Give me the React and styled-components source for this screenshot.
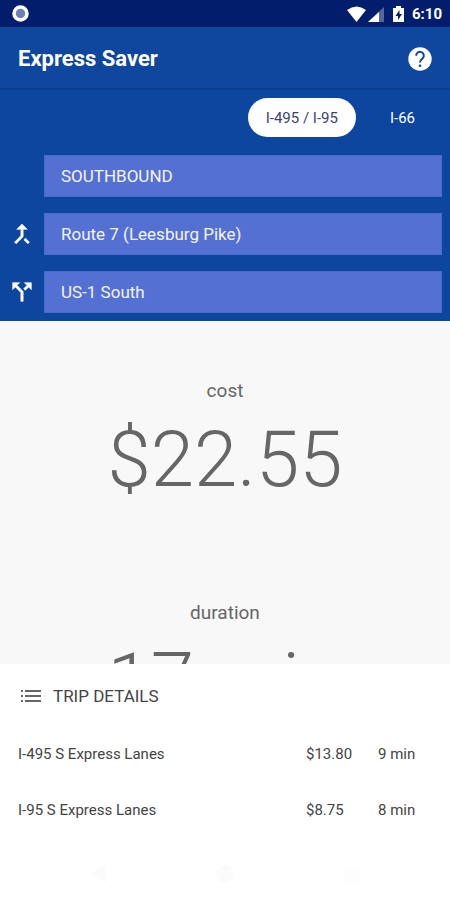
import React, { useState } from "react";
import styled, { createGlobalStyle } from "styled-components";

const GlobalStyle = createGlobalStyle`
  *, *::before, *::after { box-sizing: border-box; }
  body {
    margin: 0;
    font-family: Roboto, "Liberation Sans", sans-serif;
    background: #fff;
  }
  button, select { font: inherit; }
`;

const Screen = styled.div`
  display: flex;
  flex-direction: column;
  height: 100vh;
  overflow: hidden;
`;

const StatusBar = styled.div`
  flex: none;
  display: flex;
  align-items: center;
  justify-content: space-between;
  height: 27px;
  padding: 0 8px 0 12px;
  background: #011d6c;
  color: #fff;
`;

const StatusIcons = styled.div`
  display: flex;
  align-items: center;
`;

const Clock = styled.span`
  margin-left: 6px;
  font-size: 15px;
  line-height: 20px;
  font-weight: 700;
`;

const Svg = styled.svg`
  display: block;
  flex: none;
`;

const AppBar = styled.header`
  flex: none;
  display: flex;
  align-items: center;
  justify-content: space-between;
  height: 63px;
  padding: 2px 16px 0 18px;
  background: #0f479f;
  color: #fff;
  border-bottom: 2px solid #0c3e90;
`;

const Title = styled.h1`
  margin: 0;
  font-size: 22px;
  line-height: 28px;
  font-weight: 700;
`;

const IconButton = styled.button`
  display: flex;
  align-items: center;
  justify-content: center;
  padding: 0;
  border: 0;
  background: none;
  color: inherit;
  cursor: pointer;
`;

const RouteForm = styled.form`
  flex: none;
  padding: 8px 8px 8px 0;
  background: #0c469f;
  color: #fff;
`;

const Highways = styled.div`
  display: flex;
  justify-content: flex-end;
  gap: 16px;
  padding-right: 9px;
`;

const HighwayButton = styled.button`
  height: 39px;
  padding: 0 18px;
  border: 0;
  border-radius: 20px;
  font-size: 15px;
  cursor: pointer;
  color: ${({ $active }) => ($active ? "#3d4077" : "#fff")};
  background: ${({ $active }) => ($active ? "#fff" : "transparent")};
`;

const Fields = styled.div`
  display: grid;
  gap: 16px;
  padding-top: 18px;
`;

const Field = styled.label`
  display: grid;
  grid-template-columns: 44px 1fr;
  align-items: center;
`;

const FieldIcon = styled.span`
  display: flex;
  justify-content: center;
`;

const Picker = styled.select`
  appearance: none;
  width: 100%;
  height: 42px;
  padding: 0 16px;
  border: 1px solid #4b6bcb;
  border-radius: 0;
  background: #5570d3;
  color: #f3f5ff;
  font-size: 17px;
  cursor: pointer;
`;

const Summary = styled.main`
  flex: 1;
  min-height: 0;
  overflow-y: auto;
  scrollbar-width: none;
  background: #f8f8f8;
  color: #666;
  text-align: center;
`;

const Metric = styled.section`
  height: 222px;
  padding-top: 58px;
`;

const MetricLabel = styled.h2`
  margin: 0;
  font-size: 19px;
  line-height: 24px;
  font-weight: 400;
`;

const MetricValue = styled.p`
  margin: 11px 0 0;
  font-size: 78px;
  line-height: 92px;
  font-weight: 300;
  white-space: nowrap;
`;

const Sheet = styled.section`
  flex: none;
  padding: 16px 0 0;
  background: #fff;
  color: #444;
`;

const SheetHeading = styled.h2`
  display: flex;
  align-items: center;
  gap: 8px;
  margin: 0 0 14px;
  padding-left: 17px;
  font-size: 17px;
  line-height: 32px;
  font-weight: 400;
`;

const Trips = styled.table`
  width: 100%;
  table-layout: fixed;
  border-collapse: collapse;
  font-size: 15px;
`;

const Cell = styled.td`
  height: 56px;
  padding: 0 0 0 ${({ $lead }) => ($lead ? "18px" : "0")};
  width: ${({ $lead }) => ($lead ? "auto" : "72px")};
  white-space: nowrap;
`;

const NavBar = styled.nav`
  display: grid;
  grid-template-columns: repeat(3, 1fr);
  width: 84%;
  height: 62px;
  margin: 0 auto;
  padding-top: 10px;
  color: #fbfbfb;
`;

function MergeIcon() {
  return (
    <Svg width="28" height="28" viewBox="0 0 24 24" fill="currentColor" aria-hidden="true">
      <path
        d="M17 20.41 18.41 19 15 15.59 13.59 17 17 20.41zM7.5 8H11v5.59L5.59 19 7 20.41l6-6V8h3.5L12 3.5 7.5 8z"
        stroke="currentColor"
        strokeWidth="0.5"
      />
    </Svg>
  );
}

function SplitIcon() {
  return (
    <Svg width="28" height="28" viewBox="0 0 24 24" fill="currentColor" aria-hidden="true">
      <path
        d="m14 4 2.29 2.29-2.88 2.88 1.42 1.42 2.88-2.88L20 10V4h-6zm-4 0H4v6l2.29-2.29 4.71 4.7V20h2v-8.41l-5.29-5.3L10 4z"
        stroke="currentColor"
        strokeWidth="0.5"
      />
    </Svg>
  );
}

function HelpIcon() {
  return (
    <Svg width="28" height="28" viewBox="0 0 28 28" aria-hidden="true">
      <circle cx="14" cy="14" r="11.7" fill="#fff" />
      <path
        d="M10.200 10.800a3.800 3.800 0 1 1 6.500 2.500c-1.500 1.400-2.700 2.200-2.700 4.200"
        fill="none"
        stroke="#0f479f"
        strokeWidth="2"
      />
      <circle cx="14" cy="20.800" r="1.300" fill="#0f479f" />
    </Svg>
  );
}

function ListIcon() {
  return (
    <Svg width="28" height="28" viewBox="0 0 28 28" fill="#666" aria-hidden="true">
      <path d="M4 8h2v2H4zM4 13h2v2H4zM4 18h2v2H4zM8 8h16v2H8zM8 13h16v2H8zM8 18h16v2H8z" />
    </Svg>
  );
}

const FIELDS = [
  { label: "Direction", options: ["SOUTHBOUND", "NORTHBOUND"] },
  { label: "Entry", options: ["Route 7 (Leesburg Pike)"], icon: <MergeIcon /> },
  { label: "Exit", options: ["US-1 South"], icon: <SplitIcon /> },
];

const METRICS = [
  { label: "cost", value: "$22.55" },
  { label: "duration", value: "17 min" },
];

const TRIPS = [
  { name: "I-495 S Express Lanes", cost: "$13.80", time: "9 min" },
  { name: "I-95 S Express Lanes", cost: "$8.75", time: "8 min" },
];

export default function App() {
  const [highway, setHighway] = useState("I-495 / I-95");

  return (
    <>
      <GlobalStyle />
      <Screen>
        <StatusBar>
          <Svg width="17" height="17" viewBox="0 0 17 17" aria-hidden="true">
            <circle cx="8.500" cy="8.500" r="6.500" fill="#6c80b4" stroke="#fff" strokeWidth="3.500" />
          </Svg>
          <StatusIcons>
            <Svg width="65" height="20" viewBox="0 0 65 20" aria-hidden="true">
              <path d="M6 6Q15.500 -1 25 6L15.500 18Z" fill="#fff" />
              <path d="M43 3V18H27Z" fill="#52679f" />
              <path d="M38 8V18H27Z" fill="#fff" />
              <path d="M55 2h5v2h3v14H52V4h3z" fill="#fff" />
              <path d="m58.500 6-4 6h2.500v4l4-6h-2.500z" fill="#011d6c" />
            </Svg>
            <Clock>6:10</Clock>
          </StatusIcons>
        </StatusBar>

        <AppBar>
          <Title>Express Saver</Title>
          <IconButton type="button" aria-label="Help">
            <HelpIcon />
          </IconButton>
        </AppBar>

        <RouteForm>
          <Highways>
            {["I-495 / I-95", "I-66"].map((name) => (
              <HighwayButton
                key={name}
                type="button"
                $active={name === highway}
                aria-pressed={name === highway}
                onClick={() => setHighway(name)}
              >
                {name}
              </HighwayButton>
            ))}
          </Highways>
          <Fields>
            {FIELDS.map(({ label, options, icon }) => (
              <Field key={label}>
                <FieldIcon>{icon}</FieldIcon>
                <Picker aria-label={label}>
                  {options.map((option) => (
                    <option key={option}>{option}</option>
                  ))}
                </Picker>
              </Field>
            ))}
          </Fields>
        </RouteForm>

        <Summary>
          {METRICS.map(({ label, value }) => (
            <Metric key={label}>
              <MetricLabel>{label}</MetricLabel>
              <MetricValue>{value}</MetricValue>
            </Metric>
          ))}
        </Summary>

        <Sheet>
          <SheetHeading>
            <ListIcon />
            TRIP DETAILS
          </SheetHeading>
          <Trips>
            <tbody>
              {TRIPS.map(({ name, cost, time }) => (
                <tr key={name}>
                  <Cell $lead>{name}</Cell>
                  <Cell>{cost}</Cell>
                  <Cell>{time}</Cell>
                </tr>
              ))}
            </tbody>
          </Trips>
          <NavBar>
            <IconButton type="button" aria-label="Back">
              <Svg width="20" height="20" viewBox="0 0 20 20" fill="currentColor" aria-hidden="true">
                <path d="M2 10 17 1v18z" />
              </Svg>
            </IconButton>
            <IconButton type="button" aria-label="Home">
              <Svg width="20" height="20" viewBox="0 0 20 20" fill="currentColor" aria-hidden="true">
                <circle cx="10" cy="10" r="9" />
              </Svg>
            </IconButton>
            <IconButton type="button" aria-label="Recent apps">
              <Svg width="20" height="20" viewBox="0 0 20 20" fill="#fdfdfd" aria-hidden="true">
                <path d="M2 2h16v16H2z" />
              </Svg>
            </IconButton>
          </NavBar>
        </Sheet>
      </Screen>
    </>
  );
}
